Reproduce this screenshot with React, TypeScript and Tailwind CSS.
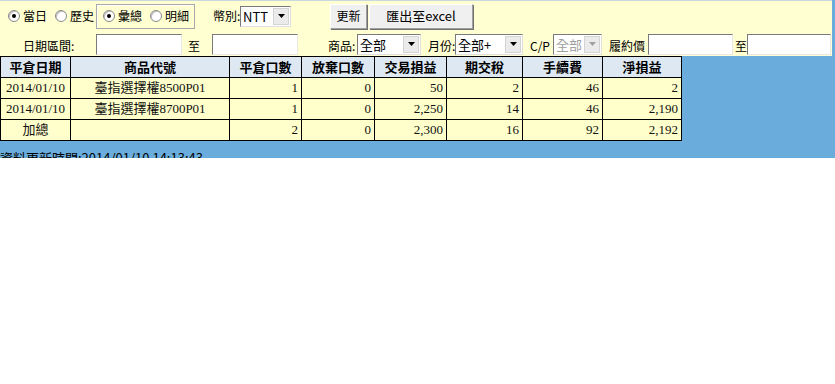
import React from "react";

const font = { fontFamily: '"Noto Sans CJK TC", "Liberation Sans", sans-serif' };

function Radio({ checked, label }: { checked?: boolean; label: string }) {
  return (
    <span className="flex items-center shrink-0 whitespace-nowrap">
      <span className="w-[12px] h-[12px] rounded-full border border-[#8a8a8a] bg-white flex items-center justify-center shadow-[inset_1px_1px_0_#c0c0c0]">
        {checked && <span className="w-[4px] h-[4px] rounded-full bg-black" />}
      </span>
      <span className="ml-[3px] text-[12px] leading-none">{label}</span>
    </span>
  );
}

function Select({ value, w, disabled }: { value: string; w: number; disabled?: boolean }) {
  return (
    <span
      className="flex items-center shrink-0 h-[21px] bg-white border border-[#7a7a7a] border-b-[#e0e0e0] border-r-[#e0e0e0]"
      style={{ width: w }}
    >
      <span
        className={
          "flex-1 pl-[2px] text-[13px] leading-none whitespace-nowrap " +
          (disabled ? "text-[#a0a0a0]" : "text-black")
        }
      >
        {value}
      </span>
      <span className="w-[16px] h-[17px] mr-[1px] bg-[#ebebeb] border border-[#d4d4d4] flex items-center justify-center">
        <svg width="7" height="4" viewBox="0 0 7 4">
          <path d="M0 0h7L3.5 4z" fill={disabled ? "#a0a0a0" : "#000"} />
        </svg>
      </span>
    </span>
  );
}

function Input({ w }: { w: number }) {
  return (
    <span
      className="block shrink-0 h-[21px] bg-white border border-[#7a7a7a] border-b-[#e8e8e8] border-r-[#e8e8e8]"
      style={{ width: w }}
    />
  );
}

function Label({ w, ml, children, cls = "" }: { w: number; ml: number; children: React.ReactNode; cls?: string }) {
  return (
    <span
      className={"shrink-0 whitespace-nowrap overflow-visible text-[12px] leading-none mt-[4px] " + cls}
      style={{ width: w, marginLeft: ml }}
    >
      {children}
    </span>
  );
}

const rows = [
  ["2014/01/10", "臺指選擇權8500P01", "1", "0", "50", "2", "46", "2"],
  ["2014/01/10", "臺指選擇權8700P01", "1", "0", "2,250", "14", "46", "2,190"],
  ["加總", "", "2", "0", "2,300", "16", "92", "2,192"],
];

const heads = ["平倉日期", "商品代號", "平倉口數", "放棄口數", "交易損益", "期交稅", "手續費", "淨損益"];
const widths = [70, 159, 72, 73, 72, 76, 80, 79];

export default function App() {
  return (
    <div className="w-[835px] h-[384px] bg-white" style={font}>
      <div className="h-[158px] bg-[#6aaddc] overflow-hidden">
        <div className="w-[832px] h-[56px] bg-[#ffffd2] border-t border-[#c8d8dc] pt-[2px]">
          <div className="flex items-center h-[26px]">
            <span className="ml-[8px] w-[47px] shrink-0">
              <Radio checked label="當日" />
            </span>
            <span className="w-[41px] shrink-0">
              <Radio label="歷史" />
            </span>
            <span className="w-[99px] shrink-0 h-[25px] border border-[#a8a8a8] shadow-[inset_1px_1px_0_#fff] flex items-center pl-[6px] gap-[8px]">
              <Radio checked label="彙總" />
              <Radio label="明細" />
            </span>
            <span className="ml-[18px] w-[27px] shrink-0 whitespace-nowrap text-[12px]">幣別:</span>
            <Select value="NTT" w={51} />
            <span className="ml-[39px] shrink-0 h-[25px] w-[37px] bg-[#f0f0f0] border border-[#a0a0a0] border-t-white border-l-white shadow-[1px_1px_0_#707070] flex items-center justify-center text-[12px]">
              更新
            </span>
            <span className="ml-[2px] shrink-0 h-[25px] w-[104px] bg-[#f0f0f0] border border-[#a0a0a0] border-t-white border-l-white shadow-[1px_1px_0_#707070] flex items-center justify-center text-[13px] whitespace-nowrap">
              匯出至excel
            </span>
          </div>
          <div className="flex items-center h-[24px] mt-[3px]">
            <Label ml={23} w={73}>日期區間:</Label>
            <Input w={86} />
            <Label ml={6} w={24}>至</Label>
            <Input w={86} />
            <Label ml={30} w={29}>商品:</Label>
            <Select value="全部" w={64} />
            <Label ml={7} w={27}>月份:</Label>
            <Select value="全部+" w={68} />
            <Label ml={7} w={23} cls="text-[11px]">C/P</Label>
            <Select value="全部" w={49} disabled />
            <Label ml={7} w={39}>履約價</Label>
            <Input w={85} />
            <Label ml={2} w={12}>至</Label>
            <Input w={84} />
          </div>
        </div>
        <table className="border-collapse border border-black text-[13px]">
          <thead>
            <tr className="bg-[#dde8f3] h-[21px]">
              {heads.map((h, i) => (
                <th
                  key={h}
                  className="border border-black font-bold text-center p-0"
                  style={{ width: widths[i] }}
                >
                  {h}
                </th>
              ))}
            </tr>
          </thead>
          <tbody>
            {rows.map((r, ri) => (
              <tr key={ri} className="bg-[#ffffcc] h-[21px]">
                {r.map((c, ci) => (
                  <td
                    key={ci}
                    className={
                      "border border-black py-0 text-[#111] " +
                      (ci < 2 ? "text-center" : "text-right pr-[3px]")
                    }
                    style={{ fontFamily: '"Liberation Serif", "Noto Sans CJK TC", serif' }}
                  >
                    {c}
                  </td>
                ))}
              </tr>
            ))}
          </tbody>
        </table>
        <div className="mt-[10px] text-[13px] leading-none whitespace-nowrap">資料更新時間:2014/01/10 14:13:43</div>
      </div>
    </div>
  );
}
